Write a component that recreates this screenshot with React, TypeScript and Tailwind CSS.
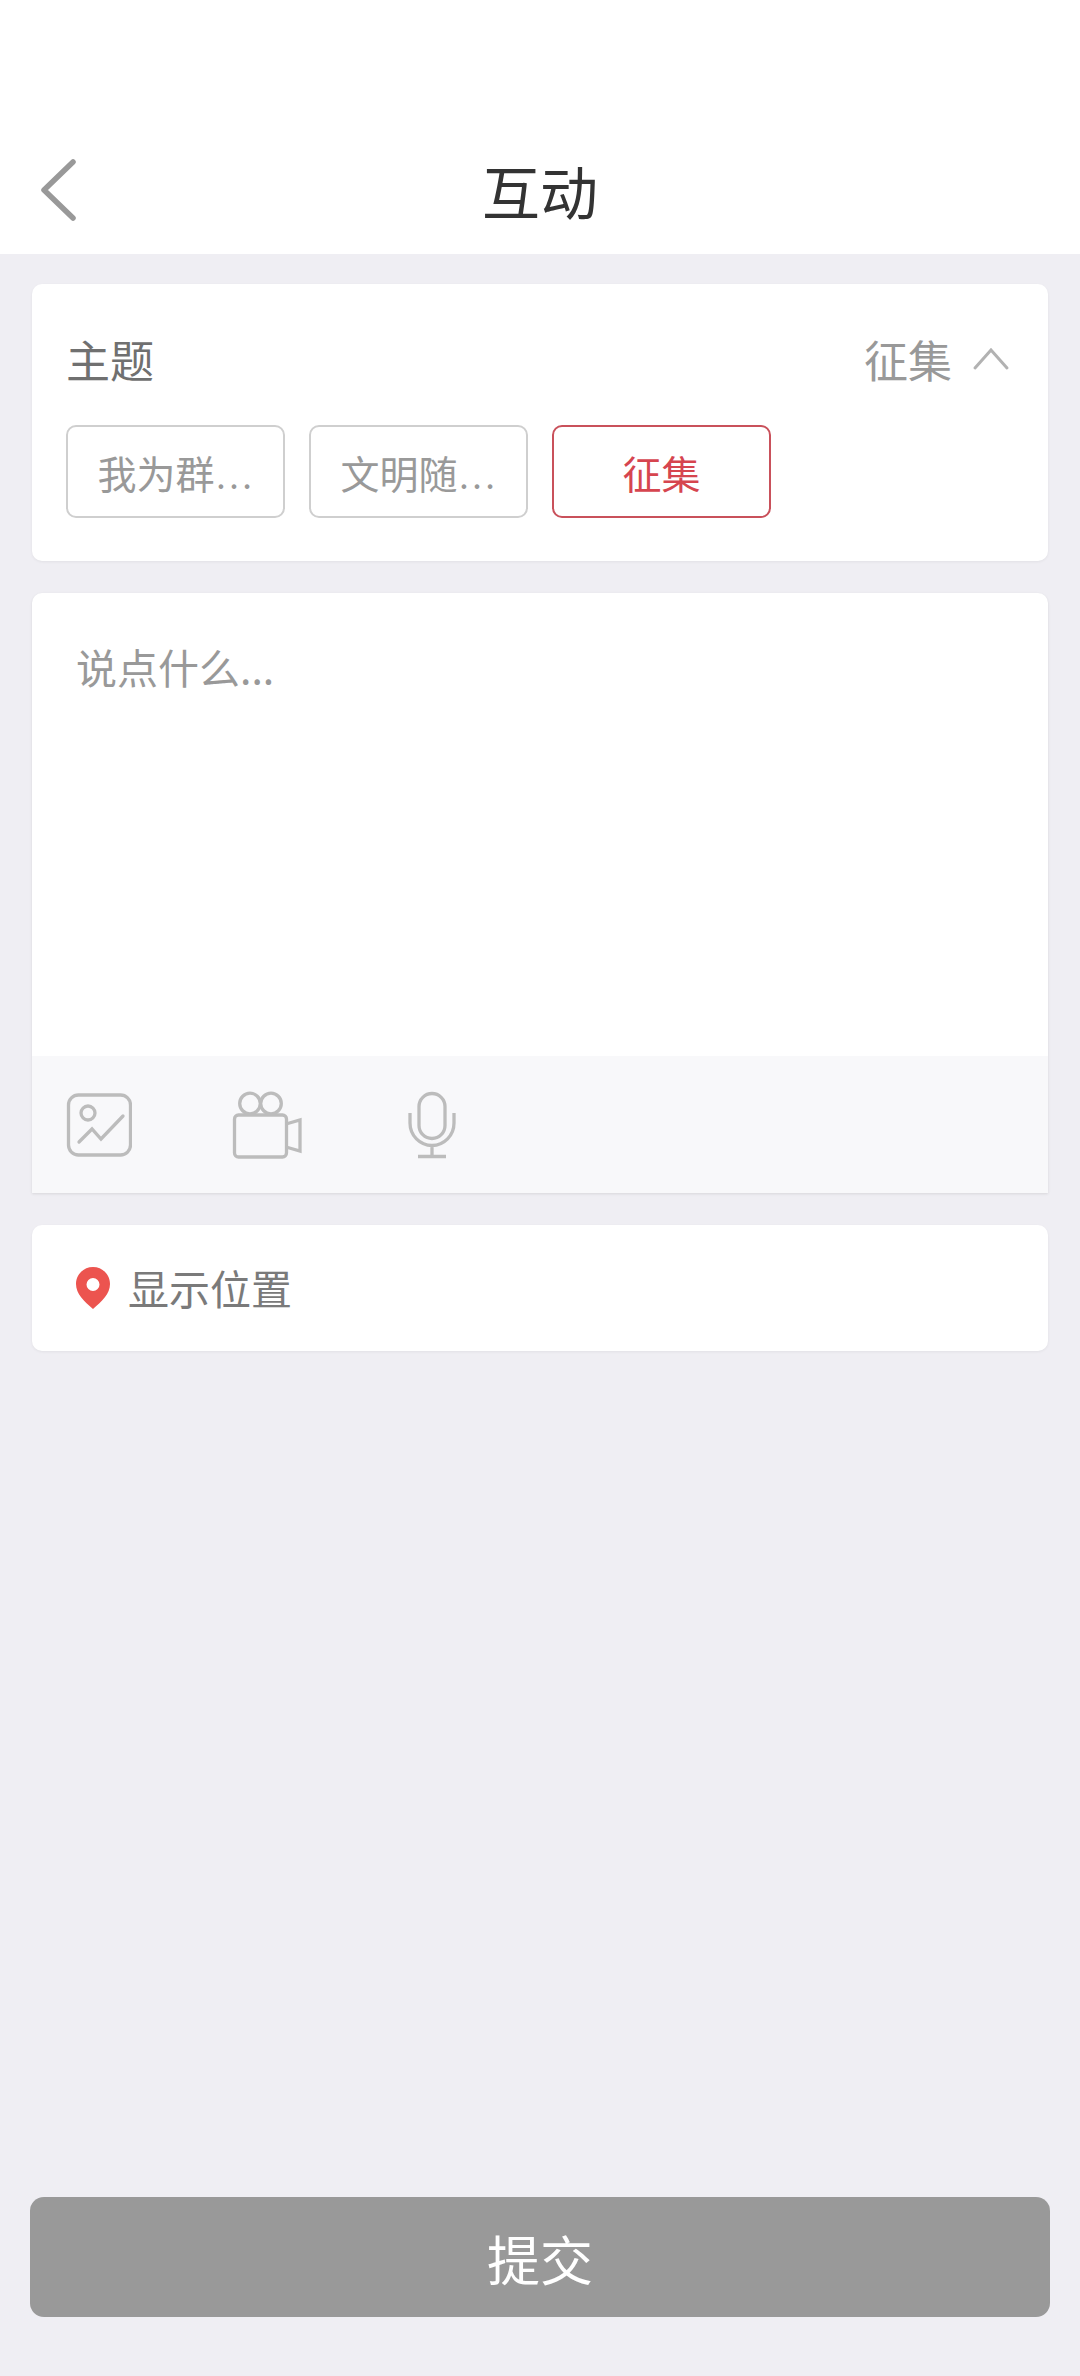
import { useState } from "react";

const topics = ["我为群众办实事", "文明随手拍一拍", "征集"];

function BackIcon() {
  return (
    <svg width="44" height="68" viewBox="0 0 44 68" fill="none" stroke="#999" strokeWidth="5.5" strokeLinecap="round" strokeLinejoin="round">
      <path d="M37 6 8 34l29 28" />
    </svg>
  );
}

function ChevronIcon({ open }: { open: boolean }) {
  return (
    <svg className={open ? "" : "rotate-180"} width="38" height="24" viewBox="0 0 38 24" fill="none" stroke="#b2b2b2" strokeWidth="3" strokeLinecap="round">
      <path d="M3 21 19 3l16 18" />
    </svg>
  );
}

function ImageIcon() {
  return (
    <svg width="66" height="68" viewBox="0 0 66 68" fill="none" stroke="#bcbcbc" strokeWidth="3.3">
      <rect x="2.5" y="4" width="62" height="60" rx="10" />
      <circle cx="22" cy="22" r="7" />
      <path d="m13 51 13-13 9 10 22-23" strokeLinecap="round" />
    </svg>
  );
}

function VideoIcon() {
  return (
    <svg width="70" height="68" viewBox="0 0 70 68" fill="none" stroke="#bcbcbc" strokeWidth="3.3">
      <circle cx="18" cy="12.5" r="10.3" />
      <circle cx="39" cy="12.5" r="10.3" />
      <rect x="2.5" y="24" width="52" height="42" rx="4" />
      <path d="m54 33 14-4v31l-14-4" />
    </svg>
  );
}

function MicIcon() {
  return (
    <svg width="60" height="68" viewBox="-6 0 60 68" fill="none" stroke="#bcbcbc" strokeWidth="3.3">
      <rect x="11" y="2.5" width="26" height="45" rx="13" />
      <path d="M2 22v10a22 22.5 0 0 0 44 0V22M24 55v10M10 65.5h28" />
    </svg>
  );
}

function PinIcon() {
  return (
    <svg width="34" height="42" viewBox="0 0 34 42">
      <path fill="#ec544f" fillRule="evenodd" d="M17 0C7.500 0 0 7.500 0 17c0 10 8 17 17 25 9-8 17-15 17-25C34 7.500 26.500 0 17 0Zm0 11a6.500 6.500 0 1 1 0 13 6.500 6.500 0 0 1 0-13Z" />
    </svg>
  );
}

function TopicLabel({ name }: { name: string }) {
  if (name.length <= 4) return <>{name}</>;
  return (
    <>
      {name.slice(0, 3)}
      <span className="font-['Liberation_Serif',serif] leading-none">…</span>
    </>
  );
}

export default function App() {
  const [open, setOpen] = useState(true);
  const [topic, setTopic] = useState("征集");

  return (
    <div className="flex min-h-screen flex-col bg-[#efeef3] font-['Noto_Sans_CJK_SC',sans-serif] text-[#999]">
      <header className="grid grid-cols-[1fr_auto_1fr] items-center bg-white px-9 pt-[126px]">
        <button type="button" aria-label="返回" className="flex h-32 w-20 items-center">
          <BackIcon />
        </button>
        <h1 className="text-[58px] leading-[128px] text-[#333]">互动</h1>
      </header>

      <main className="flex flex-1 flex-col gap-8 px-8 pt-[30px]">
        <section className="rounded-[10px] bg-white px-[34px] pt-[42px] pb-[43px] shadow-[0_1px_3px_rgba(0,0,0,0.06)]">
          <div className="flex items-center justify-between">
            <h2 className="text-[44px] leading-[66px] text-[#707070]">主题</h2>
            <button type="button" aria-expanded={open} onClick={() => setOpen(!open)} className="flex items-center gap-5 pr-1 text-[44px] leading-[66px]">
              {topic}
              <ChevronIcon open={open} />
            </button>
          </div>
          {open && (
            <div className="mt-[33px] flex flex-wrap gap-6">
              {topics.map((name) => (
                <button
                  key={name}
                  type="button"
                  aria-pressed={name === topic}
                  onClick={() => setTopic(name)}
                  className={
                    name === topic
                      ? "h-[93px] w-[219px] rounded-[10px] border-2 border-[#c9515b] text-[39px] leading-[58px] text-[#d6454f]"
                      : "h-[93px] w-[219px] rounded-[10px] border-2 border-[#cfcfcf] text-[39px] leading-[58px]"
                  }
                >
                  <TopicLabel name={name} />
                </button>
              ))}
            </div>
          )}
        </section>

        <section className="overflow-hidden rounded-t-[10px] bg-white shadow-[0_1px_3px_rgba(0,0,0,0.1)]">
          <textarea
            aria-label="说点什么"
            placeholder="说点什么..."
            className="block h-[463px] w-full resize-none px-11 pt-[42px] text-[41px] leading-[62px] text-[#666] outline-none placeholder:text-[#999]"
          />
          <div className="flex h-[137px] items-center gap-[100px] bg-[#f8f8fa] px-[34px]">
            <button type="button" aria-label="添加图片"><ImageIcon /></button>
            <button type="button" aria-label="添加视频"><VideoIcon /></button>
            <button type="button" aria-label="添加语音"><MicIcon /></button>
          </div>
        </section>

        <button type="button" className="flex h-[126px] items-center gap-[18px] rounded-[10px] bg-white px-11 text-[41px] text-[#7a7a7a] shadow-[0_1px_3px_rgba(0,0,0,0.06)]">
          <PinIcon />
          显示位置
        </button>
      </main>

      <footer className="px-[30px] pb-[59px]">
        <button type="submit" className="h-30 w-full rounded-[14px] bg-[#999] pt-1 text-[53px] text-white">提交</button>
      </footer>
    </div>
  );
}
